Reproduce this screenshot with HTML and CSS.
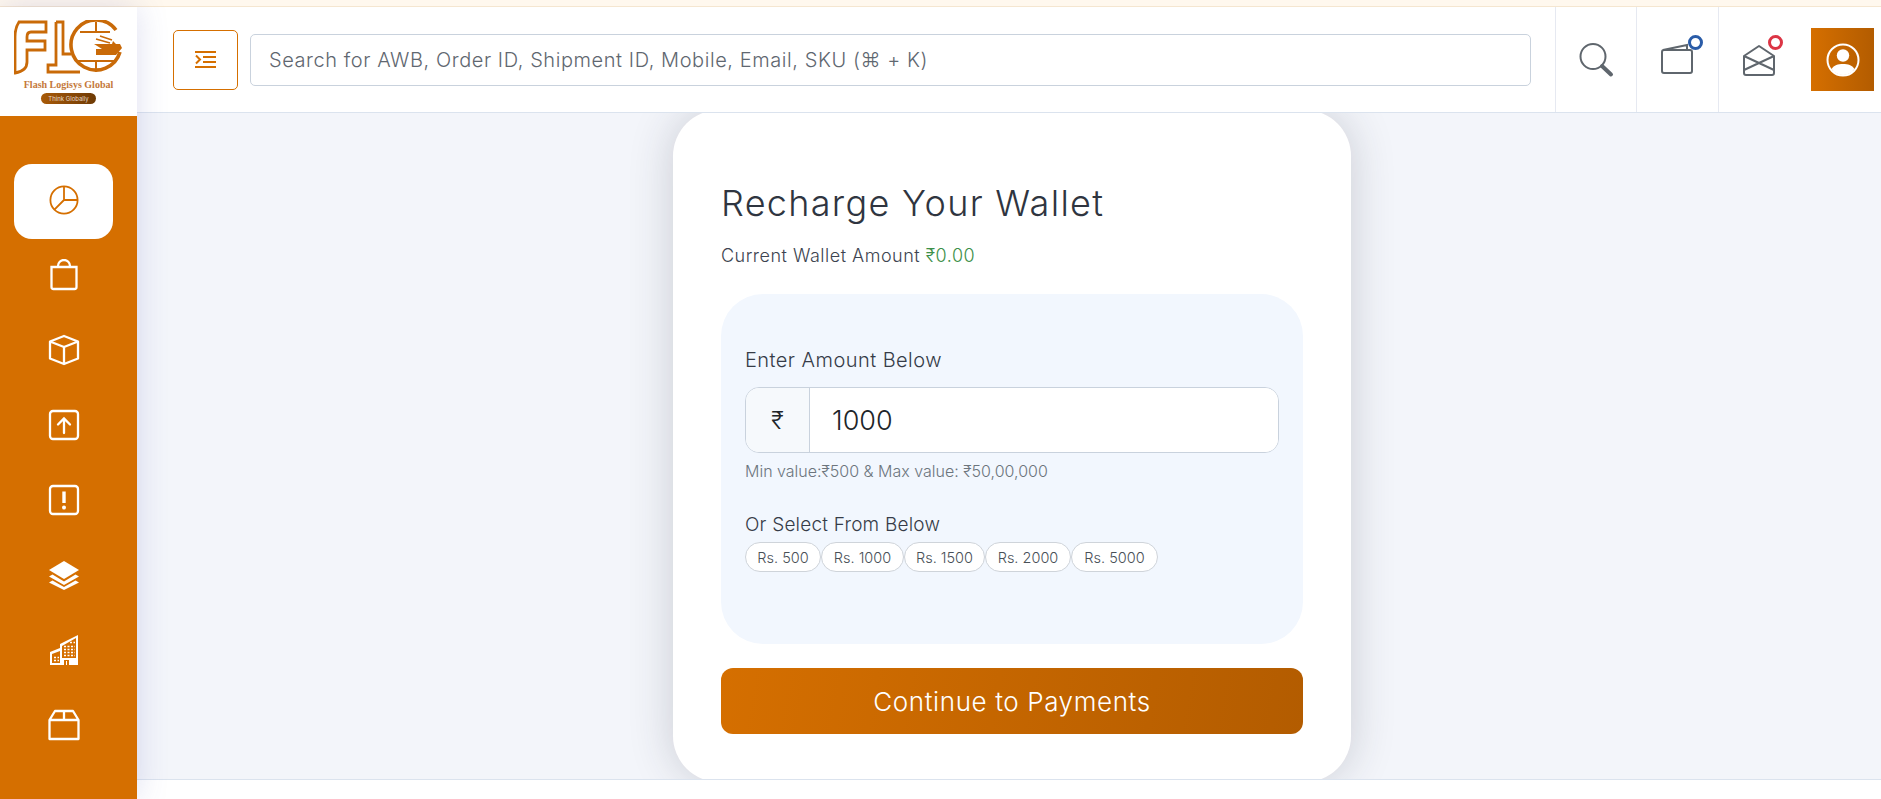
FILE: index.html
```html
<!DOCTYPE html>
<html lang="en">
<head>
    <meta charset="UTF-8">
    <meta name="viewport" content="width=device-width, initial-scale=1.0">
    <title>Recharge Your Wallet</title>
    <link rel="stylesheet" href="styles.css">
</head>
<body>
    <div class="top-stripe"></div>
    <div class="app">
        <!-- Sidebar -->
        <aside class="sidebar">
            <div class="logo">
                <svg class="logo-mark" width="110" height="58" viewBox="0 0 110 58" fill="none" stroke="#c96a08">
                    <path stroke-width="2.800" d="M5,2 H32 V12 H17 Q13,12 13,17 V21 H31 V30 H13 V42 Q13,51 1,53 V17 Q1,8 5,2 Z"/>
                    <path stroke-width="2.800" d="M42,2 H49 V34 H57 M42,2 V45 H34 V52 H66"/>
                    <path stroke-width="3.600" d="M102,10 A25,25 0 1 0 106,32"/>
                    <path stroke-width="2" d="M82,2 V13 M82,41 V52 M66,12 H96 M64,41 H100"/>
                    <path stroke-width="1.400" d="M82,19 L96,23 M86,16 L98,20"/>
                    <path fill="#c96a08" stroke="none" d="M80,24 L98,24 L99,21 L102,24 H106 L108,28 L102,35 H82 V29 H88 Z"/>
                </svg>
                <div class="logo-name">Flash Logisys Global</div>
                <div class="logo-tag">Think Globally</div>
            </div>
            <nav class="nav">
                <a class="nav-item active" href="#">
                    <svg width="32" height="32" viewBox="0 0 32 32" fill="none" stroke="currentColor" stroke-width="1.8"><circle cx="16" cy="16" r="13.6"/><path d="M16 2.4V16H29.6M16 16L6.4 25.6"/></svg>
                </a>
                <a class="nav-item" href="#">
                    <svg width="32" height="32" viewBox="0 0 32 32" fill="none" stroke="currentColor" stroke-width="2.300"><path d="M3.500 8H28.500V28Q28.500 30 26.500 30H5.500Q3.500 30 3.500 28ZM10 8V7A6 6 0 0 1 22 7V8"/></svg>
                </a>
                <a class="nav-item" href="#">
                    <svg width="32" height="32" viewBox="0 0 32 32" fill="none" stroke="currentColor" stroke-width="2.300" stroke-linejoin="round"><path d="M16 2L30 7.500V24.500L16 30L2 24.500V7.500ZM2 7.500L16 13L30 7.500M16 13V30"/></svg>
                </a>
                <a class="nav-item" href="#">
                    <svg width="32" height="32" viewBox="0 0 32 32" fill="none" stroke="currentColor" stroke-width="2.300"><rect x="2" y="2" width="28" height="28" rx="3"/><path stroke-linecap="round" d="M16 24V10M10 15.500L16 9.500L22 15.500"/></svg>
                </a>
                <a class="nav-item" href="#">
                    <svg width="32" height="32" viewBox="0 0 32 32" fill="none" stroke="currentColor" stroke-width="2.300"><rect x="2" y="2" width="28" height="28" rx="3"/><path stroke-width="3.400" d="M16 7.500V19"/><circle cx="16" cy="23.500" r="2" fill="currentColor" stroke="none"/></svg>
                </a>
                <a class="nav-item" href="#">
                    <svg width="32" height="32" viewBox="0 0 32 32" fill="currentColor"><path d="M16 2L31 11L16 20L1 11Z"/><path d="M4.500 15.500L16 22.500L27.500 15.500L31 17.500L16 26L1 17.500Z"/><path d="M4.500 21.500L16 28L27.500 21.500L31 23.500L16 31L1 23.500Z"/></svg>
                </a>
                <a class="nav-item" href="#">
                    <svg width="32" height="32" viewBox="0 0 32 32"><path fill="currentColor" fill-rule="evenodd" d="M2 31V18L12 14V10L30 1V31H21V26H16V31ZM4 29H12V17L4 20ZM14 12V24H28V4ZM18 27V31H19V27Z"/><path stroke="currentColor" stroke-width="1.600" stroke-dasharray="2 1.500" d="M6 23.500H11M6 26.500H11M16 12.500H27M16 15.500H27M16 18.500H27M16 21.500H27M22 8.500H27"/></svg>
                </a>
                <a class="nav-item" href="#">
                    <svg width="32" height="32" viewBox="0 0 32 32" fill="none" stroke="currentColor" stroke-width="2.300" stroke-linejoin="round"><path d="M1.500 11L7 2H25L30.500 11V30H1.500ZM1.500 11H30.500M16 2V11"/></svg>
                </a>
            </nav>
        </aside>

        <!-- Header -->
        <header class="header">
            <button class="toggle-btn" type="button">
                <svg width="21" height="17" viewBox="0 0 21 17" fill="none" stroke="currentColor" stroke-width="2"><path d="M0 1H21M8 6H21M8 11H21M0 16H21M1 4.500L5 8.500L1 12.500"/></svg>
            </button>
            <input class="search-input" type="text" placeholder="Search for AWB, Order ID, Shipment ID, Mobile, Email, SKU (⌘ + K)">
            <div class="header-cell first-cell">
                <svg width="36" height="36" viewBox="0 0 36 36" fill="none" stroke="#5f666d" stroke-width="2"><circle cx="15" cy="14.500" r="12.500"/><path stroke-width="4" stroke-linecap="round" d="M24 24L33 32.500"/></svg>
            </div>
            <div class="header-cell">
                <svg width="36" height="36" viewBox="0 0 36 36" fill="none" stroke="#5f666d" stroke-width="2"><rect x="2" y="8" width="30" height="23" rx="2"/><path d="M3 8L27 3V8"/></svg>
                <span class="dot dot-blue"></span>
            </div>
            <div class="header-cell">
                <svg width="36" height="36" viewBox="0 0 36 36" fill="none" stroke="#5f666d" stroke-width="2" stroke-linejoin="round"><path d="M2 14L17 4L32 14V31Q32 33 30 33H4Q2 33 2 31ZM2 14L32 28M32 14L2 28"/></svg>
                <span class="dot dot-red"></span>
            </div>
            <div class="avatar">
                <svg width="34" height="34" viewBox="0 0 34 34" fill="none"><circle cx="17" cy="17" r="15.500" stroke="#fff" stroke-width="2"/><circle cx="17" cy="12.500" r="6.200" fill="#fff"/><path fill="#fff" d="M5.500 26C8 22 12 21 17 21S26 22 28.500 26Q24 32 17 32T5.500 26Z"/></svg>
            </div>
        </header>

        <!-- Recharge card -->
        <main class="content">
            <div class="card">
                <h2 class="card-title">Recharge Your Wallet</h2>
                <p class="wallet-amount">Current Wallet Amount <span class="amount-green">₹0.00</span></p>
                <div class="panel">
                    <label class="panel-label" for="amount">Enter Amount Below</label>
                    <div class="amount-group">
                        <span class="amount-prefix">₹</span>
                        <input class="amount-input" id="amount" type="text" value="1000">
                    </div>
                    <div class="amount-hint">Min value:₹500 &amp; Max value: ₹50,00,000</div>
                    <div class="panel-label select-label">Or Select From Below</div>
                    <div class="chips">
                        <button class="chip chip-500" type="button">Rs. 500</button>
                        <button class="chip chip-1000" type="button">Rs. 1000</button>
                        <button class="chip chip-1500" type="button">Rs. 1500</button>
                        <button class="chip chip-2000" type="button">Rs. 2000</button>
                        <button class="chip chip-5000" type="button">Rs. 5000</button>
                    </div>
                </div>
                <button class="pay-btn" type="button">Continue to Payments</button>
            </div>
        </main>
        <footer class="footer"></footer>
    </div>
</body>
</html>
```

FILE: styles.css
```css
* {
    box-sizing: border-box;
}
html, body {
    height: 100%;
}
body {
    margin: 0;
    font-family: Inter, "DejaVu Sans", sans-serif;
    font-weight: 300;
    background-color: #fff;
    overflow: hidden;
}
.top-stripe {
    height: 7px;
    background-color: #fff8ee;
    border-bottom: 1px solid #f5e6d0;
}
.app {
    height: 792px;
    display: grid;
    grid-template-columns: 137px 1fr;
    grid-template-rows: 106px 666px 20px;
}

/* Sidebar */
.sidebar {
    grid-row: 1 / 4;
    display: flex;
    flex-direction: column;
    background-color: #d56f00;
    box-shadow: 0 0 30px rgba(70, 80, 170, 0.18);
    z-index: 2;
}
.logo {
    height: 109px;
    background-color: #fff;
    display: flex;
    flex-direction: column;
    align-items: center;
    padding-top: 13px;
}
.logo-name {
    font-family: "Liberation Serif", serif;
    font-size: 10px;
    font-weight: bold;
    line-height: 12px;
    margin-top: 1px;
    color: #c4783a;
}
.logo-tag {
    width: 55px;
    height: 11px;
    margin-top: 2px;
    font-size: 6px;
    font-weight: 400;
    line-height: 11px;
    text-align: center;
    color: #e8d8c8;
    border-radius: 6px;
    background: linear-gradient(90deg, #a85a08, #6e3a05);
}
.nav {
    padding: 48px 24px 0 14px;
}
.nav-item {
    height: 75px;
    padding-bottom: 3px;
    display: flex;
    align-items: center;
    justify-content: center;
    color: #fff;
    border-radius: 18px;
}
.nav-item.active {
    background-color: #fff;
    color: #d56f00;
}

/* Header */
.header {
    display: flex;
    align-items: center;
    padding-left: 36px;
    background-color: #fff;
    border-bottom: 1px solid #dbe3ee;
}
.toggle-btn {
    width: 65px;
    height: 60px;
    display: flex;
    align-items: center;
    justify-content: center;
    flex-shrink: 0;
    color: #d56f00;
    background-color: #fff;
    border: 1px solid #d56f00;
    border-radius: 5px;
}
.search-input {
    width: 1281px;
    height: 52px;
    margin-left: 12px;
    padding: 0 18px;
    font-family: Inter, "DejaVu Sans", sans-serif;
    font-size: 20px;
    font-weight: 300;
    letter-spacing: 0.57px;
    background-color: #fff;
    border: 1px solid #c9d2dd;
    border-radius: 5px;
}
.search-input::placeholder {
    color: #5f6770;
    opacity: 1;
}
.header-cell {
    position: relative;
    width: 82px;
    height: 100%;
    display: flex;
    align-items: center;
    justify-content: center;
    border-left: 1px solid #e6e9f1;
    flex-shrink: 0;
}
.first-cell {
    width: 81px;
    margin-left: 24px;
}
.dot {
    position: absolute;
    top: 28px;
    right: 15px;
    width: 15px;
    height: 15px;
    border-radius: 50%;
    background-color: #fff;
    border: 3.500px solid #2a5ca8;
}
.dot-red {
    right: 17px;
    border-color: #dc3545;
}
.avatar {
    width: 63px;
    height: 63px;
    margin-left: 11px;
    display: flex;
    align-items: center;
    justify-content: center;
    flex-shrink: 0;
    background: linear-gradient(90deg, #d56f00, #b35c00);
}

/* Content */
.content {
    display: flex;
    justify-content: center;
    padding-left: 6px;
    background-color: #f3f5fa;
    overflow: hidden;
}
.card {
    width: 678px;
    height: 672px;
    margin-top: -3px;
    padding: 70px 48px 0;
    background-color: #fff;
    border-radius: 46px;
    box-shadow: 0 0 45px rgba(40, 45, 60, 0.2);
}
.card-title {
    margin: 0;
    font-size: 36px;
    font-weight: 300;
    letter-spacing: 1.3px;
    line-height: 46px;
    color: #2f3540;
}
.wallet-amount {
    margin: 18px 0 0;
    font-size: 18px;
    letter-spacing: 0.5px;
    line-height: 24px;
    color: #3d4450;
}
.amount-green {
    color: #3d9049;
}
.panel {
    height: 350px;
    margin-top: 26px;
    padding: 54px 24px 0;
    background-color: #f2f7fe;
    border-radius: 42px;
}
.panel-label {
    display: block;
    font-size: 20px;
    letter-spacing: 0.45px;
    line-height: 24px;
    color: #363c48;
}
.amount-group {
    height: 66px;
    margin-top: 15px;
    display: flex;
    background-color: #fff;
    border: 1px solid #c9d2dd;
    border-radius: 14px;
    overflow: hidden;
}
.amount-prefix {
    width: 64px;
    display: flex;
    align-items: center;
    justify-content: center;
    font-size: 24px;
    color: #212529;
    background-color: #f6f9fc;
    border-right: 1px solid #c9d2dd;
}
.amount-input {
    flex: 1;
    min-width: 0;
    padding: 0 22px;
    border: none;
    outline: none;
    font-family: Inter, "DejaVu Sans", sans-serif;
    font-size: 27px;
    font-weight: 300;
    color: #212529;
}
.amount-hint {
    margin-top: 8px;
    font-size: 16px;
    line-height: 20px;
    color: #6c757d;
}
.select-label {
    margin-top: 32px;
    font-size: 19px;
    letter-spacing: 0.2px;
}
.chips {
    display: flex;
    margin-top: 5px;
}
.chip {
    height: 30px;
    padding: 0;
    font-family: Inter, "DejaVu Sans", sans-serif;
    font-size: 14.500px;
    font-weight: 300;
    color: #495057;
    background-color: #fff;
    border: 1px solid #cfd4da;
    border-radius: 15px;
}
.chip-500 { width: 76px; }
.chip-1000 { width: 83px; }
.chip-1500 { width: 81px; }
.chip-2000 { width: 86px; }
.chip-5000 { width: 87px; }
.pay-btn {
    width: 100%;
    height: 66px;
    margin-top: 24px;
    font-family: Inter, "DejaVu Sans", sans-serif;
    font-size: 26px;
    font-weight: 300;
    letter-spacing: 0.6px;
    color: #fff;
    background: linear-gradient(100deg, #d56f00, #b35c00);
    border: none;
    border-radius: 12px;
}

/* Footer */
.footer {
    grid-column: 2;
    background-color: #fff;
    border-top: 1px solid #dbe3ee;
}
```
